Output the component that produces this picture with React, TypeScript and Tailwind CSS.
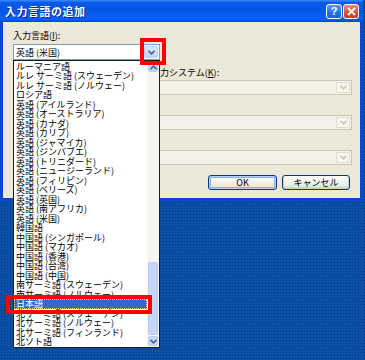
import React from 'react';

const languages = [
  'ルーマニア語',
  'ルレ サーミ語 (スウェーデン)',
  'ルレ サーミ語 (ノルウェー)',
  'ロシア語',
  '英語 (アイルランド)',
  '英語 (オーストラリア)',
  '英語 (カナダ)',
  '英語 (カリブ)',
  '英語 (ジャマイカ)',
  '英語 (ジンバブエ)',
  '英語 (トリニダード)',
  '英語 (ニュージーランド)',
  '英語 (フィリピン)',
  '英語 (ベリーズ)',
  '英語 (英国)',
  '英語 (南アフリカ)',
  '英語 (米国)',
  '韓国語',
  '中国語 (シンガポール)',
  '中国語 (マカオ)',
  '中国語 (香港)',
  '中国語 (台湾)',
  '中国語 (中国)',
  '南サーミ語 (スウェーデン)',
  '南サーミ語 (ノルウェー)',
  '日本語',
  '北サーミ語 (スウェーデン)',
  '北サーミ語 (ノルウェー)',
  '北サーミ語 (フィンランド)',
  '北ソト語',
];

const SELECTED = '日本語';

const Chevron = ({ up = false, color }: { up?: boolean; color: string }) => (
  <svg width="7" height="5" viewBox="0 0 7 5">
    <polyline
      points={up ? '0.5,4.2 3.5,1.2 6.5,4.2' : '0.5,0.8 3.5,3.8 6.5,0.8'}
      fill="none"
      stroke={color}
      strokeWidth="1.6"
    />
  </svg>
);

const DisabledCombo = ({ className = '' }: { className?: string }) => (
  <div className={`h-[15px] border border-[#cbc8b8] bg-[#f3f1e8] flex justify-end ${className}`}>
    <div className="w-[14px] m-[1px] border border-[#e2dfd2] bg-[#f7f6f1] flex items-center justify-center">
      <Chevron color="#c9c6b6" />
    </div>
  </div>
);

const XpButton = ({ label, isDefault, width }: { label: string; isDefault?: boolean; width: string }) => (
  <button
    className={`${width} h-[15px] rounded-[3px] border border-[#003c74] bg-gradient-to-b from-white to-[#e6e3d6] text-[9px] leading-[13px] text-black ${
      isDefault ? 'shadow-[inset_0_0_0_1px_#b9d0f5,inset_0_0_0_2px_#8aaeea]' : 'shadow-[inset_0_-1px_0_1px_#d6d0c5]'
    }`}
  >
    {label}
  </button>
);

export default function App() {
  return (
    <div className="relative w-[365px] h-[360px] overflow-hidden bg-[#0c4fa7] bg-[radial-gradient(#06357c_0.7px,transparent_1px)] bg-[length:3px_3px] font-['Noto_Sans_CJK_JP',sans-serif]">
      {/* Window */}
      <div className="w-[363px] flex flex-col bg-[#0a45d3]">
        {/* Title bar */}
        <div className="h-[22px] flex items-center pl-[5px] pr-[4px] bg-[linear-gradient(to_bottom,#3c8dfb_0%,#0a5ae8_12%,#0454e6_45%,#0a62f5_85%,#0553e0_95%,#0344c9_100%)]">
          <span className="text-[11px] font-bold text-white leading-none tracking-[0.5px] [text-shadow:1px_1px_0_#0a1f8a]">
            入力言語の追加
          </span>
          <div className="ml-auto flex gap-[1px]">
            <div className="w-[16px] h-[15px] rounded-[3px] border border-white bg-[linear-gradient(to_bottom,#5a9bff,#2a6ef0_60%,#1c5ee3)] flex items-center justify-center text-white text-[11px] font-bold leading-none font-['Liberation_Sans',sans-serif]">
              ?
            </div>
            <div className="w-[16px] h-[15px] rounded-[3px] border border-white bg-[linear-gradient(to_bottom,#f08b6c,#dd4f2c_60%,#c83d1d)] flex items-center justify-center">
              <svg width="9" height="9" viewBox="0 0 9 9">
                <path d="M1 1 L8 8 M8 1 L1 8" stroke="white" strokeWidth="1.8" />
              </svg>
            </div>
          </div>
        </div>

        {/* Body */}
        <div className="mx-[3px] mb-[3px] bg-[#ece9d8] pl-[10px] pr-[8px] pt-[9px] pb-[8px] flex flex-col text-black">
          <div className="h-[10px] text-[9px] leading-[10px]">
            入力言語(<span className="underline">I</span>):
          </div>
          <div className="mt-[3px] w-[147px] h-[16px] border border-[#7f9db9] bg-white flex items-center">
            <span className="pl-[2px] text-[9px] leading-none flex-1">英語 (米国)</span>
            <div className="w-[14px] h-[12px] mr-[1px] rounded-[2px] border border-[#b7cbf5] bg-[linear-gradient(to_bottom,#dce6fd,#c2d4fb)] flex items-center justify-center">
              <Chevron color="#4d6185" />
            </div>
          </div>

          <div className="mt-[8px] h-[10px] text-[9px] leading-[10px] pl-[138px]">
            入力システム(<span className="underline">K</span>):
          </div>
          <DisabledCombo className="mt-[2px]" />
          <DisabledCombo className="mt-[20px]" />
          <DisabledCombo className="mt-[20px]" />

          <div className="mt-[10px] flex justify-end gap-[5px] pr-[2px]">
            <XpButton label="OK" isDefault width="w-[69px]" />
            <XpButton label="キャンセル" width="w-[68px]" />
          </div>
        </div>
      </div>

      {/* Opened dropdown list */}
      <div className="absolute left-[13px] top-[60px] w-[147px] h-[288px] border border-[#1c1c1c] bg-white flex">
        <div className="flex-1 overflow-hidden pt-[0.5px]">
          {languages.map((lang) => (
            <div
              key={lang}
              className={`h-[9.5px] leading-[9.5px] text-[9px] pl-[2px] whitespace-nowrap ${
                lang === SELECTED
                  ? 'bg-[#316ac5] text-white outline-1 outline-dotted outline-[#f3d27a] -outline-offset-1'
                  : 'text-black'
              }`}
            >
              {lang}
            </div>
          ))}
        </div>
        <div className="w-[12px] flex flex-col bg-[#f6f5f1]">
          <div className="h-[10px] m-[1px] rounded-[2px] border border-[#b7cbf5] bg-[#c8d8fc] flex items-center justify-center">
            <Chevron up color="#4d6185" />
          </div>
          <div className="flex-1" />
          <div className="h-[73px] mx-[1px] rounded-[2px] border border-[#b7cbf5] bg-[#c6d6fb]" />
          <div className="h-[10px] m-[1px] rounded-[2px] border border-[#b7cbf5] bg-[#c8d8fc] flex items-center justify-center">
            <Chevron color="#4d6185" />
          </div>
        </div>
      </div>

      {/* Red annotation boxes */}
      <div className="absolute left-[140px] top-[38px] w-[26px] h-[27px] border-[4px] border-[#ff0000]" />
      <div className="absolute left-[6px] top-[295px] w-[146px] h-[19px] border-[4px] border-[#ff0000]" />
    </div>
  );
}
